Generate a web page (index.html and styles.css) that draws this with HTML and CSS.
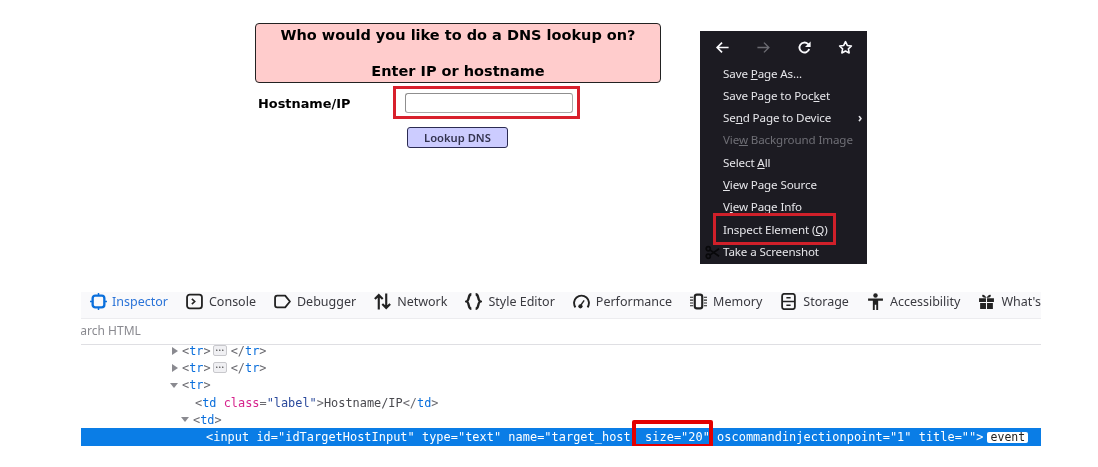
FILE: index.html
```html
<!DOCTYPE html>
<html lang="en">
<head>
<meta charset="utf-8">
<title>DNS lookup</title>
<link rel="stylesheet" href="styles.css">
</head>
<body>
<main class="page">
  <section class="top">
    <form class="form">
      <div class="banner">
        <p>Who would you like to do a DNS lookup on?</p>
        <p>Enter IP or hostname</p>
      </div>
      <div class="field-row">
        <label class="field-label">Hostname/IP</label>
        <div class="red-wrap"><span class="text-input"></span></div>
      </div>
      <div class="button-row"><span class="lookup">Lookup DNS</span></div>
    </form>

    <nav class="menu">
      <div class="nav-icons">
        <svg viewBox="0 0 16 16" class="nav-icon"><path d="M14.5 8H2.5M7.5 2.8 2.3 8l5.2 5.2" fill="none" stroke="#fbfbfe" stroke-width="1.8"/></svg>
        <svg viewBox="0 0 16 16" class="nav-icon"><path d="M1.5 8h12M8.500 2.800 13.700 8l-5.200 5.200" fill="none" stroke="#6b6b72" stroke-width="1.500"/></svg>
        <svg viewBox="0 0 16 16" class="nav-icon"><path d="M13 9.500A5.300 5.300 0 1 1 11.600 4.200L13.400 6" fill="none" stroke="#fbfbfe" stroke-width="2"/><path d="M14.500 1.500v6H8.500z" fill="#fbfbfe"/></svg>
        <svg viewBox="0 0 16 16" class="nav-icon"><path d="m8 1.800 1.900 4 4.400.6-3.200 3 .8 4.400L8 11.700l-3.900 2.100.8-4.400-3.200-3 4.400-.6z" fill="none" stroke="#fbfbfe" stroke-width="1.700" stroke-linejoin="round"/></svg>
      </div>
      <div class="menu-item">Save <u>P</u>age As...</div>
      <div class="menu-item">Save Page to Poc<u>k</u>et</div>
      <div class="menu-item menu-item-sub"><span>Se<u>n</u>d Page to Device</span><span class="chevron">›</span></div>
      <div class="menu-item menu-item-off">Vie<u>w</u> Background Image</div>
      <div class="menu-item">Select <u>A</u>ll</div>
      <div class="menu-item"><u>V</u>iew Page Source</div>
      <div class="menu-item">V<u>i</u>ew Page Info</div>
      <div class="menu-item">Inspect Element (<u>Q</u>)</div>
      <div class="menu-item menu-item-icon">
        <svg viewBox="0 0 16 16" class="scissors"><g fill="none" stroke="#08080a" stroke-width="1.800"><circle cx="3.500" cy="4" r="2.200"/><circle cx="3.500" cy="12" r="2.200"/><path d="M5.200 5.200 15 12M5.200 10.800 15 4"/></g></svg>
        <span>Take a Screenshot</span>
      </div>
      <span class="callout callout-menu"></span>
    </nav>
  </section>

  <section class="devtools">
    <div class="tabs">
      <div class="tab tab-active">
        <svg viewBox="0 0 16 16" class="tab-icon"><rect x="2.500" y="2.500" width="11" height="11" rx="2.500" fill="none" stroke="#0a6fdc" stroke-width="2.200"/><path d="M8 0v2M8 14v2M0 8h2M14 8h2" stroke="#0a6fdc" stroke-width="1.400"/></svg>
        <span>Inspector</span>
      </div>
      <div class="tab">
        <svg viewBox="0 0 16 16" class="tab-icon"><rect x="1" y="1.500" width="14" height="13" rx="2.500" fill="none" stroke="#222" stroke-width="1.700"/><path d="m5.500 5.500 2.700 2.500-2.700 2.500" fill="none" stroke="#222" stroke-width="1.500"/></svg>
        <span>Console</span>
      </div>
      <div class="tab">
        <svg viewBox="0 0 16 16" class="tab-icon"><path d="M3 2.500h7.500L15 8l-4.500 5.500H3a2 2 0 0 1-2-2v-7a2 2 0 0 1 2-2z" fill="none" stroke="#222" stroke-width="1.700" stroke-linejoin="round"/></svg>
        <span>Debugger</span>
      </div>
      <div class="tab">
        <svg viewBox="0 0 16 16" class="tab-icon"><path d="M4.500 15.500V2M.8 5.700 4.500 2l3.700 3.700M11.500.5V14M7.800 10.300l3.700 3.700 3.700-3.700" fill="none" stroke="#222" stroke-width="2"/></svg>
        <span>Network</span>
      </div>
      <div class="tab">
        <svg viewBox="0 0 16 16" class="tab-icon"><path d="M6 1.200C2.500 1.200 4.500 7 1.500 8 4.500 9 2.500 14.800 6 14.800M10 1.200C13.500 1.200 11.500 7 14.500 8 11.500 9 13.500 14.800 10 14.800" fill="none" stroke="#222" stroke-width="2.200"/></svg>
        <span>Style Editor</span>
      </div>
      <div class="tab">
        <svg viewBox="0 0 16 16" class="tab-icon"><path d="M2.300 13.500A7 7 0 1 1 13.700 13.500" fill="none" stroke="#222" stroke-width="1.800"/><path d="M7 12 10.500 7" stroke="#222" stroke-width="1.300"/><circle cx="7" cy="12.500" r="2" fill="#222"/></svg>
        <span>Performance</span>
      </div>
      <div class="tab">
        <svg viewBox="0 0 16 16" class="tab-icon"><rect x="4.500" y="1.500" width="7" height="13" rx="2" fill="none" stroke="#222" stroke-width="2"/><path d="M0 4h3M0 6.700h3M0 9.400h3M0 12h3M13 4h3M13 6.700h3M13 9.400h3M13 12h3" stroke="#222" stroke-width="1"/></svg>
        <span>Memory</span>
      </div>
      <div class="tab">
        <svg viewBox="0 0 16 16" class="tab-icon"><rect x="2" y=".8" width="12" height="14.400" rx="2" fill="none" stroke="#222" stroke-width="1.700"/><path d="M2 8h12M6 4.500h4M6 11.500h4" stroke="#222" stroke-width="1.500"/></svg>
        <span>Storage</span>
      </div>
      <div class="tab">
        <svg viewBox="0 0 16 16" class="tab-icon"><circle cx="8" cy="2.300" r="2.100" fill="#222"/><path d="M1 5.200h14v2h-4.500V16H8.700v-5H7.300v5H5.500V7.200H1z" fill="#222"/></svg>
        <span>Accessibility</span>
      </div>
      <div class="tab">
        <svg viewBox="0 0 16 16" class="tab-icon"><path d="M1 5h6.500v3.500H1zM8.500 5H15v3.500H8.500zM2 9.500h5.500V15H2zM8.500 9.500H14V15H8.500z" fill="#222"/><path d="M8 4.500C6 1 3.500 1 4 3c.2 1 2.500 1.500 4 1.500zM8 4.500c2-3.500 4.500-3.500 4-1.500-.2 1-2.500 1.500-4 1.500z" fill="#222"/></svg>
        <span>What's New</span>
      </div>
    </div>
    <div class="search"><span class="search-text">Search HTML</span></div>
    <div class="tree">
      <div class="line indent-1"><i class="arrow arrow-right"></i><b class="tag">&lt;<em>tr</em>&gt;</b><span class="dots">•••</span><b class="tag">&lt;/<em>tr</em>&gt;</b></div>
      <div class="line indent-1"><i class="arrow arrow-right"></i><b class="tag">&lt;<em>tr</em>&gt;</b><span class="dots">•••</span><b class="tag">&lt;/<em>tr</em>&gt;</b></div>
      <div class="line indent-1"><i class="arrow arrow-down"></i><b class="tag">&lt;<em>tr</em>&gt;</b></div>
      <div class="line indent-2"><b class="tag">&lt;<em>td</em> </b><span class="attr">class</span><b class="tag">=</b><span class="val">"label"</span><b class="tag">&gt;</b>Hostname/IP<b class="tag">&lt;/<em>td</em>&gt;</b></div>
      <div class="line indent-3"><i class="arrow arrow-down"></i><b class="tag">&lt;<em>td</em>&gt;</b></div>
      <div class="line line-selected">&lt;input id="idTargetHostInput" type="text" name="target_host" size="20" oscommandinjectionpoint="1" title=""&gt;<span class="event">event</span></div>
    </div>
    <span class="callout callout-size"></span>
  </section>
</main>
</body>
</html>
```

FILE: styles.css
```css
* { box-sizing: border-box; }
html, body { margin: 0; padding: 0; background: #fff; }
.page { width: 1098px; height: 467px; overflow: hidden; filter: blur(0.3px); }

.top { display: flex; align-items: flex-start; height: 292px; padding: 23px 0 0 255px; }

.form { width: 406px; font-family: "DejaVu Sans", sans-serif; color: #000; }
.banner {
  height: 60px; border: 1px solid #222; border-radius: 4px; background: #ffcccc;
  text-align: center; font-weight: bold; font-size: 14.500px; line-height: 18px;
}
.banner p { margin: 2px 0 18px; }
.field-row { display: flex; align-items: flex-start; margin-top: 3px; padding-left: 3px; }
.field-label { width: 135px; padding-top: 10px; font-weight: bold; font-size: 12.900px; line-height: 16px; }
.red-wrap { width: 187px; height: 33px; border: 3px solid #d8202c; padding: 4px 0 0 9px; }
.text-input {
  display: block; width: 168px; height: 20px; background: #fff;
  border: 1px solid #aaa; border-top-color: #8f8f8f; border-left-color: #8f8f8f; border-radius: 3px;
}
.button-row { padding: 8px 0 0 152px; }
.lookup {
  display: block; width: 101px; height: 21px; border: 1px solid #2b2b52; border-radius: 3px;
  background: #ccccff; color: #33334f; text-align: center;
  font-family: "Noto Sans", sans-serif; font-weight: 600; font-size: 11.200px; line-height: 19px;
}

.menu {
  position: relative; width: 167px; height: 233px; margin: 8px 0 0 39px;
  background: #1c1b22; color: #e6e6ea; font-family: "Noto Sans", sans-serif; font-size: 11.600px; letter-spacing: -0.12px;
}
.nav-icons { display: flex; justify-content: space-between; height: 31.500px; padding: 9px 14px 0 15px; }
.nav-icon { width: 15px; height: 15px; }
.menu-item { height: 22.300px; padding-left: 23px; line-height: 22px; white-space: nowrap; }
.menu-item u { text-underline-offset: 1px; }
.menu-item-sub { display: flex; justify-content: space-between; padding-right: 5px; }
.chevron { font-weight: bold; }
.menu-item-off { color: #6f6f76; }
.menu-item-icon { display: flex; align-items: center; padding-left: 5px; }
.scissors { width: 15px; height: 15px; margin-right: 3px; }

.callout { position: absolute; display: block; }
.callout-menu { left: 13px; top: 182px; width: 123px; height: 32px; border: 3px solid #d0202a; }
.callout-size { left: 551px; top: 128px; width: 81px; height: 28px; border: 4px solid #e30000; border-radius: 2px; }

.devtools { position: relative; width: 960px; margin-left: 81px; overflow: hidden; }
.tabs {
  display: flex; gap: 18px; height: 27px; padding-left: 9px; background: #f9f9fb;
  border-bottom: 1px solid #ececef; white-space: nowrap; overflow: hidden;
  font-family: "Noto Sans", sans-serif; font-size: 12.500px; line-height: 20px; color: #3a3a40;
}
.tab { display: flex; align-items: center; gap: 6px; flex: none; height: 19px; }
.tab-active { color: #2b74d8; gap: 5px; }
.tab-icon { width: 17px; height: 17px; flex: none; }
.search {
  height: 26px; border-bottom: 1px solid #dfdfe3; overflow: hidden;
  font-family: "Noto Sans", sans-serif; font-size: 12px; line-height: 24px; color: #8a8a90;
}
.search-text { display: block; margin-left: -14px; }
.tree { margin-top: -3px; font-family: "DejaVu Sans Mono", monospace; font-size: 11.900px; color: #4a4a4f; }
.line { display: flex; align-items: center; height: 17.300px; white-space: pre; }
.indent-1 { padding-left: 91px; }
.indent-2 { padding-left: 114px; }
.indent-3 { padding-left: 102px; }
.arrow { display: block; flex: none; width: 0; height: 0; margin-right: 4px; border-style: solid; border-color: transparent; }
.arrow-right { border-width: 4px 0 4px 6px; border-left-color: #8a8a90; }
.arrow-down { border-width: 5px 4px 0; border-top-color: #8a8a90; margin-left: -2px; }
.tag { font-weight: normal; color: #6a6a70; }
.tag em { font-style: normal; color: #0a6fdc; }
.attr { color: #d6228c; }
.val { color: #2b4a9c; }
.dots {
  display: block; width: 14px; height: 11px; margin: 0 4px 0 2px; border: 1px solid #c8c8cc; border-radius: 2px;
  background: #f0f0f3; color: #333; font-size: 5px; line-height: 9px; text-align: center;
}
.line-selected { height: 18px; padding-left: 125px; background: #0a7de6; color: #fff; letter-spacing: 0.04px; }
.event {
  display: block; height: 11px; margin-left: 4px; padding: 0 3px; border-radius: 2px;
  background: #fff; color: #222; font-size: 11.500px; line-height: 11px;
}
```
